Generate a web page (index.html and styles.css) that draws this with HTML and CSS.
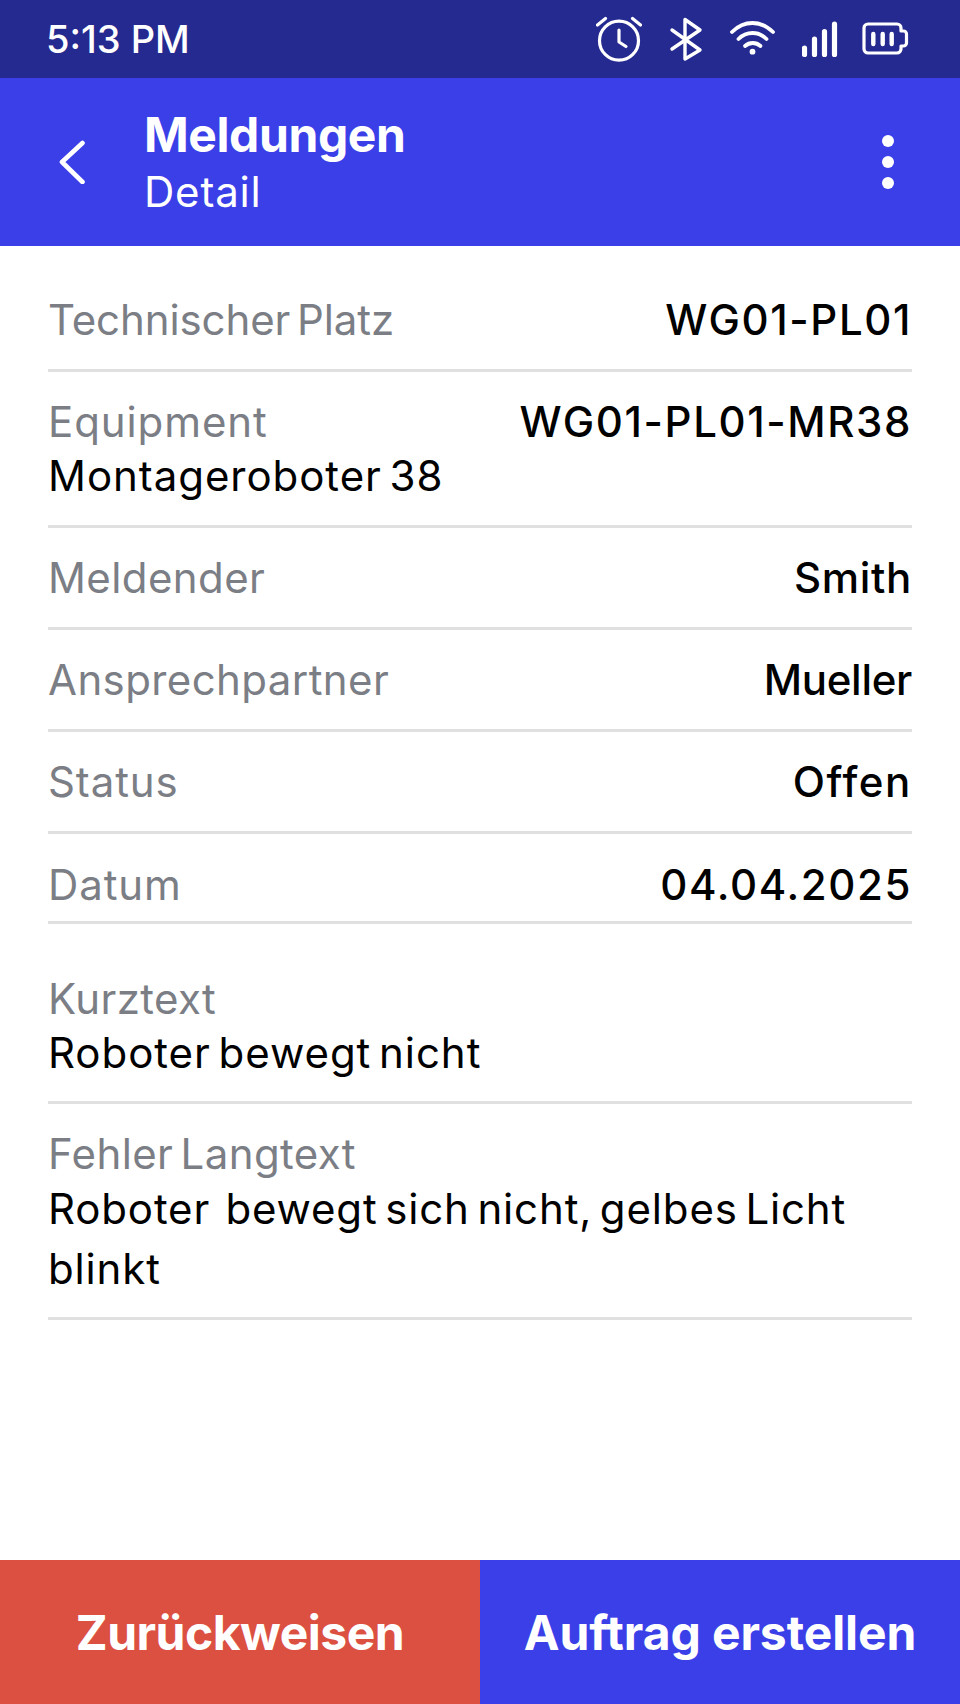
FILE: index.html
```html
<!DOCTYPE html>
<html lang="en">
<head>
    <meta charset="UTF-8">
    <meta name="viewport" content="width=device-width, initial-scale=1.0">
    <title>Meldungen Detail</title>
    <link rel="stylesheet" href="styles.css">
</head>
<body>
    <div class="screen">
        <div class="status-bar">
            <span class="clock">5:13 PM</span>
            <div class="status-icons">
                <!-- alarm -->
                <svg width="46" height="78" viewBox="596 0 46 78" fill="none" stroke="#fff" stroke-linecap="round" stroke-linejoin="round" stroke-width="3.2">
                    <circle cx="619" cy="40.7" r="19.5"/>
                    <path d="M619 30v12l7 4.5"/>
                    <path d="M597.5 25l8-6.5M640.5 25l-8-6.5"/>
                </svg>
                <!-- bluetooth -->
                <svg width="40" height="78" viewBox="666 0 40 78" fill="none" stroke="#fff" stroke-linecap="round" stroke-linejoin="round" stroke-width="3.4">
                    <path d="M672 30l28 20-15 9V19.500l15 10.500-28 19"/>
                </svg>
                <!-- wifi -->
                <svg width="48" height="78" viewBox="730 0 48 78" fill="none" stroke="#fff" stroke-linecap="round" stroke-width="3.8">
                    <path d="M732 32c12-12 29-12 41 0"/>
                    <path d="M738.500 39c8-8 20-8 28 0"/>
                    <path d="M745 46c4.500-4 11-4 15.500 0"/>
                    <circle cx="752.500" cy="51.700" r="1.400" fill="#fff" stroke-width="3"/>
                </svg>
                <!-- signal -->
                <svg width="36" height="78" viewBox="802 0 36 78" fill="none" stroke="#fff" stroke-linecap="round" stroke-width="5.200">
                    <path d="M804.500 48v6.500M814.500 39v15.500M824.500 31.500v23M834.500 24v30.500"/>
                </svg>
                <!-- battery -->
                <svg width="47" height="78" viewBox="862 0 47 78" fill="none" stroke="#fff" stroke-linecap="round" stroke-linejoin="round">
                    <path stroke-width="3.200" d="M868 24h29a4 4 0 0 1 4 4v3h2.500a3 3 0 0 1 3 3v9a3 3 0 0 1-3 3H901v3a4 4 0 0 1-4 4h-29a4 4 0 0 1-4-4V28a4 4 0 0 1 4-4z"/>
                    <path stroke-width="4.400" d="M873.300 34v10M882.700 34v10M891.700 34v10"/>
                </svg>
            </div>
        </div>

        <header class="app-bar">
            <svg class="back" width="30" height="44" viewBox="0 0 30 44" fill="none" stroke="#fff" stroke-width="4.600" stroke-linecap="round" stroke-linejoin="round">
                <path d="M24.500 3L4 22l20.500 20"/>
            </svg>
            <div class="titles">
                <h1>Meldungen</h1>
                <div class="subtitle">Detail</div>
            </div>
            <div class="more"><i></i><i></i><i></i></div>
        </header>

        <main class="details">
            <div class="row row-platz">
                <span class="label label-tight">Technischer Platz</span>
                <span class="value value-wide">WG01-PL01</span>
            </div>
            <div class="row">
                <div>
                    <div class="label label-loose">Equipment</div>
                    <div class="text">Montageroboter 38</div>
                </div>
                <span class="value value-wide">WG01-PL01-MR38</span>
            </div>
            <div class="row">
                <span class="label">Meldender</span>
                <span class="value value-smith">Smith</span>
            </div>
            <div class="row">
                <span class="label">Ansprechpartner</span>
                <span class="value value-narrow">Mueller</span>
            </div>
            <div class="row">
                <span class="label label-loose">Status</span>
                <span class="value value-wide">Offen</span>
            </div>
            <div class="row row-datum">
                <span class="label label-loose">Datum</span>
                <span class="value value-wide">04.04.2025</span>
            </div>
            <div class="block block-kurz">
                <div class="label">Kurztext</div>
                <div class="text">Roboter bewegt nicht</div>
            </div>
            <div class="block block-lang">
                <div class="label">Fehler Langtext</div>
                <div class="text text-long">Roboter&nbsp; bewegt sich nicht, gelbes Licht blinkt</div>
            </div>
        </main>

        <div class="actions">
            <button class="btn btn-reject">Zurückweisen</button>
            <button class="btn btn-create">Auftrag erstellen</button>
        </div>
    </div>
</body>
</html>
```

FILE: styles.css
```css
body {
    margin: 0;
    font-family: "Inter", "Noto Sans", sans-serif;
    background: #fff;
    color: #000;
}
.screen {
    width: 960px;
    height: 1704px;
    display: flex;
    flex-direction: column;
}
.status-bar {
    height: 78px;
    background-color: #252a91;
    color: #fff;
    display: flex;
    align-items: center;
    justify-content: space-between;
    padding: 0 51px 0 46px;
}
.clock {
    font-size: 38px;
    font-weight: 500;
}
.status-icons {
    display: flex;
    align-items: center;
    gap: 24px;
}
.app-bar {
    height: 168px;
    background-color: #3a3fe8;
    color: #fff;
    display: flex;
    align-items: center;
    padding: 0 66px 0 58px;
}
.back {
    margin-right: 56px;
}
.titles {
    flex: 1;
}
h1 {
    margin: 0;
    font-size: 48px;
    line-height: 58px;
    font-weight: 700;
    letter-spacing: -0.4px;
}
.subtitle {
    font-size: 42px;
    line-height: 55px;
    letter-spacing: 0.8px;
}
.more {
    display: flex;
    flex-direction: column;
    gap: 9px;
}
.more i {
    display: block;
    width: 12px;
    height: 12px;
    border-radius: 50%;
    background: #fff;
}
.details {
    flex: 1;
    padding: 0 48px;
}
.row {
    display: flex;
    justify-content: space-between;
    align-items: flex-start;
    padding: 23px 0 22px;
    border-bottom: 3px solid #e0e0e0;
}
.row-platz {
    padding-top: 47px;
}
.row-datum {
    padding: 24px 0 9px;
}
.label {
    font-size: 42px;
    line-height: 54px;
    letter-spacing: 0.4px;
    word-spacing: -5px;
    color: #7b7e85;
}
.label-tight {
    letter-spacing: -0.1px;
}
.label-loose {
    letter-spacing: 0.9px;
}
.value {
    font-size: 42px;
    line-height: 54px;
    font-weight: 500;
    letter-spacing: 0.3px;
}
.value-wide {
    letter-spacing: 1.6px;
}
.value-smith {
    letter-spacing: 0.7px;
}
.value-narrow {
    letter-spacing: -0.3px;
}
.text {
    font-size: 42px;
    line-height: 54px;
    letter-spacing: 0.95px;
    word-spacing: -5px;
}
.text-long {
    line-height: 60px;
    margin-top: -2px;
    letter-spacing: 0.85px;
}
.block {
    border-bottom: 3px solid #e0e0e0;
}
.block-kurz {
    padding: 48px 0 21px;
}
.block-lang {
    padding: 23px 0 18px;
}
.actions {
    display: grid;
    grid-template-columns: 480px 480px;
    height: 144px;
}
.btn {
    border: 0;
    color: #fff;
    font-family: inherit;
    font-size: 48px;
    font-weight: 700;
}
.btn-reject {
    background-color: #dc5042;
    letter-spacing: -0.5px;
}
.btn-create {
    background-color: #3a3fe8;
    letter-spacing: -0.1px;
}
```
